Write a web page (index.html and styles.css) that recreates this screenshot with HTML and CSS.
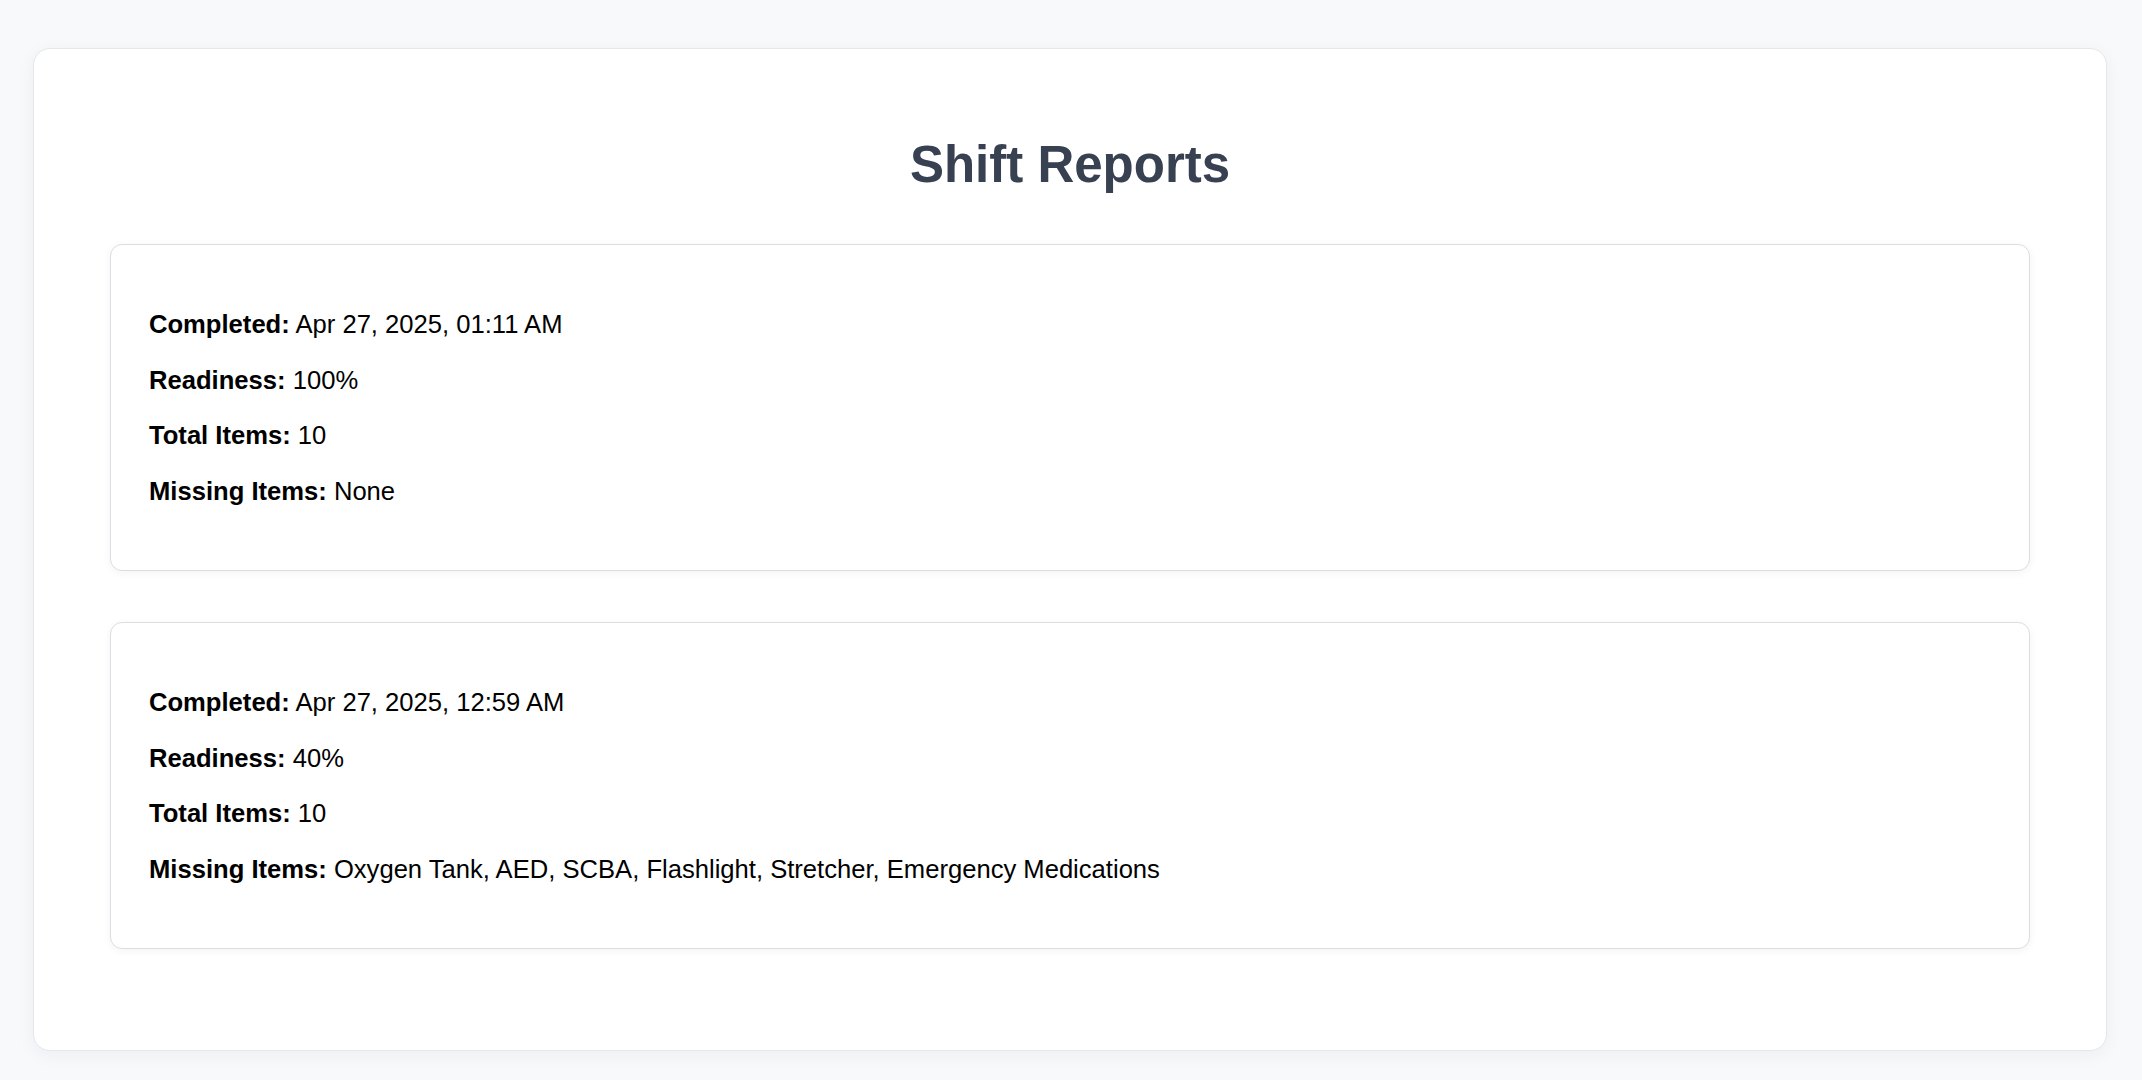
FILE: index.html
```html
<!DOCTYPE html>
<html lang="en">
<head>
<meta charset="utf-8">
<title>Shift Reports</title>
<link rel="stylesheet" href="styles.css">
</head>
<body>
<main class="panel">
  <h1 class="title">Shift Reports</h1>
  <section class="report">
    <p class="row"><strong>Completed:</strong> Apr 27, 2025, 01:11 AM</p>
    <p class="row"><strong>Readiness:</strong> 100%</p>
    <p class="row"><strong>Total Items:</strong> 10</p>
    <p class="row"><strong>Missing Items:</strong> None</p>
  </section>
  <section class="report">
    <p class="row"><strong>Completed:</strong> Apr 27, 2025, 12:59 AM</p>
    <p class="row"><strong>Readiness:</strong> 40%</p>
    <p class="row"><strong>Total Items:</strong> 10</p>
    <p class="row"><strong>Missing Items:</strong> Oxygen Tank, AED, SCBA, Flashlight, Stretcher, Emergency Medications</p>
  </section>
</main>
</body>
</html>
```

FILE: styles.css
```css
* {
  box-sizing: border-box;
}

html, body {
  margin: 0;
  background: #f8f9fb;
}

body {
  padding: 48px 35px 29px 33px;
  font-family: "Liberation Sans", Arial, Helvetica, sans-serif;
  color: #000;
}

.panel {
  background: #ffffff;
  border: 1px solid #e6e7eb;
  border-radius: 17px;
  box-shadow: 0 4px 18px rgba(20, 30, 60, 0.05);
  padding: 85px 76px 50px 76px;
}

.title {
  margin: 0 0 49px 0;
  text-align: center;
  font-size: 51px;
  line-height: 61px;
  font-weight: 700;
  color: #374151;
}

.report {
  border: 1px solid #dcdde2;
  border-radius: 12px;
  background: #ffffff;
  box-shadow: 0 2px 8px rgba(20, 30, 60, 0.05);
  padding: 39px 38px;
  margin-bottom: 51px;
}

.row {
  margin: 25px 0;
  font-size: 25.6px;
  line-height: 30.5px;
}

.row strong {
  font-weight: 700;
}
```
